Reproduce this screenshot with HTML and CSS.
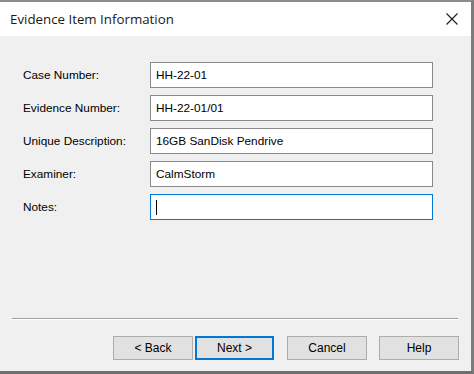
FILE: index.html
```html
<!DOCTYPE html>
<html>
<head>
<meta charset="utf-8">
<link rel="stylesheet" href="styles.css">
</head>
<body>
<div class="window">
  <div class="titlebar">
    <span class="title">Evidence Item Information</span>
    <svg class="close" width="12" height="12" viewBox="0 0 12 12"><path d="M0.5 0.5 L11.5 11.5 M11.5 0.5 L0.5 11.5" stroke="#1a1a1a" stroke-width="1.1" fill="none"/></svg>
  </div>
  <div class="content">
    <div class="form">
      <div class="row"><label class="label">Case Number:</label><div class="field">HH-22-01</div></div>
      <div class="row"><label class="label">Evidence Number:</label><div class="field">HH-22-01/01</div></div>
      <div class="row"><label class="label">Unique Description:</label><div class="field">16GB SanDisk Pendrive</div></div>
      <div class="row"><label class="label">Examiner:</label><div class="field">CalmStorm</div></div>
      <div class="row"><label class="label">Notes:</label><div class="field focused"><span class="caret"></span></div></div>
    </div>
    <div class="spacer"></div>
    <div class="separator"></div>
    <div class="buttons">
      <button class="btn back">&lt; Back</button>
      <button class="btn next default">Next &gt;</button>
      <button class="btn cancel">Cancel</button>
      <button class="btn help">Help</button>
    </div>
  </div>
</div>
</body>
</html>
```

FILE: styles.css
```css
html, body {
  margin: 0;
  padding: 0;
}
body {
  width: 474px;
  height: 374px;
  overflow: hidden;
  background: #f0f0f0;
  font-family: "Liberation Sans", Arial, sans-serif;
  color: #000;
}
.window {
  box-sizing: border-box;
  width: 474px;
  height: 374px;
  border-top: 2px solid #8c8c8c;
  border-right: 3px solid #7c7c7c;
  border-bottom: 3px solid #6f6f6f;
  display: flex;
  flex-direction: column;
}
.titlebar {
  height: 34px;
  background: #ffffff;
  display: flex;
  align-items: center;
  justify-content: space-between;
  padding: 0 13px 0 10px;
  flex: none;
}
.title {
  font-family: "Open Sans", "Noto Sans", sans-serif;
  font-size: 13.3px;
  color: #1a1a1a;
}
.close {
  display: block;
}
.content {
  flex: 1;
  background: #f0f0f0;
  display: flex;
  flex-direction: column;
}
.form {
  padding-top: 26px;
  display: flex;
  flex-direction: column;
  gap: 7px;
}
.row {
  display: flex;
  align-items: center;
  height: 26px;
}
.label {
  width: 127px;
  padding-left: 23px;
  font-size: 11.8px;
}
.field {
  box-sizing: border-box;
  width: 283px;
  height: 26px;
  background: #fff;
  border: 1px solid #8a8a8a;
  font-size: 11.8px;
  padding-left: 5px;
  display: flex;
  align-items: center;
}
.field.focused {
  border-color: #0078d7;
}
.caret {
  display: block;
  width: 1px;
  height: 15px;
  background: #000;
}
.spacer {
  flex: 1;
}
.separator {
  margin: 0 13px 0 12px;
  border-top: 1px solid #a0a0a0;
  border-bottom: 1px solid #ffffff;
}
.buttons {
  display: flex;
  justify-content: flex-end;
  margin: 16px 12px 11px 0;
}
.btn {
  box-sizing: border-box;
  width: 80px;
  height: 24px;
  background: #e1e1e1;
  border: 1px solid #adadad;
  font-family: "Liberation Sans", Arial, sans-serif;
  font-size: 12px;
  color: #000;
  padding: 0;
}
.btn.default {
  border: 2px solid #0078d7;
  width: 79px;
  margin-left: 2px;
}
.btn.cancel {
  margin-left: 13px;
}
.btn.help {
  margin-left: 12px;
}
```
